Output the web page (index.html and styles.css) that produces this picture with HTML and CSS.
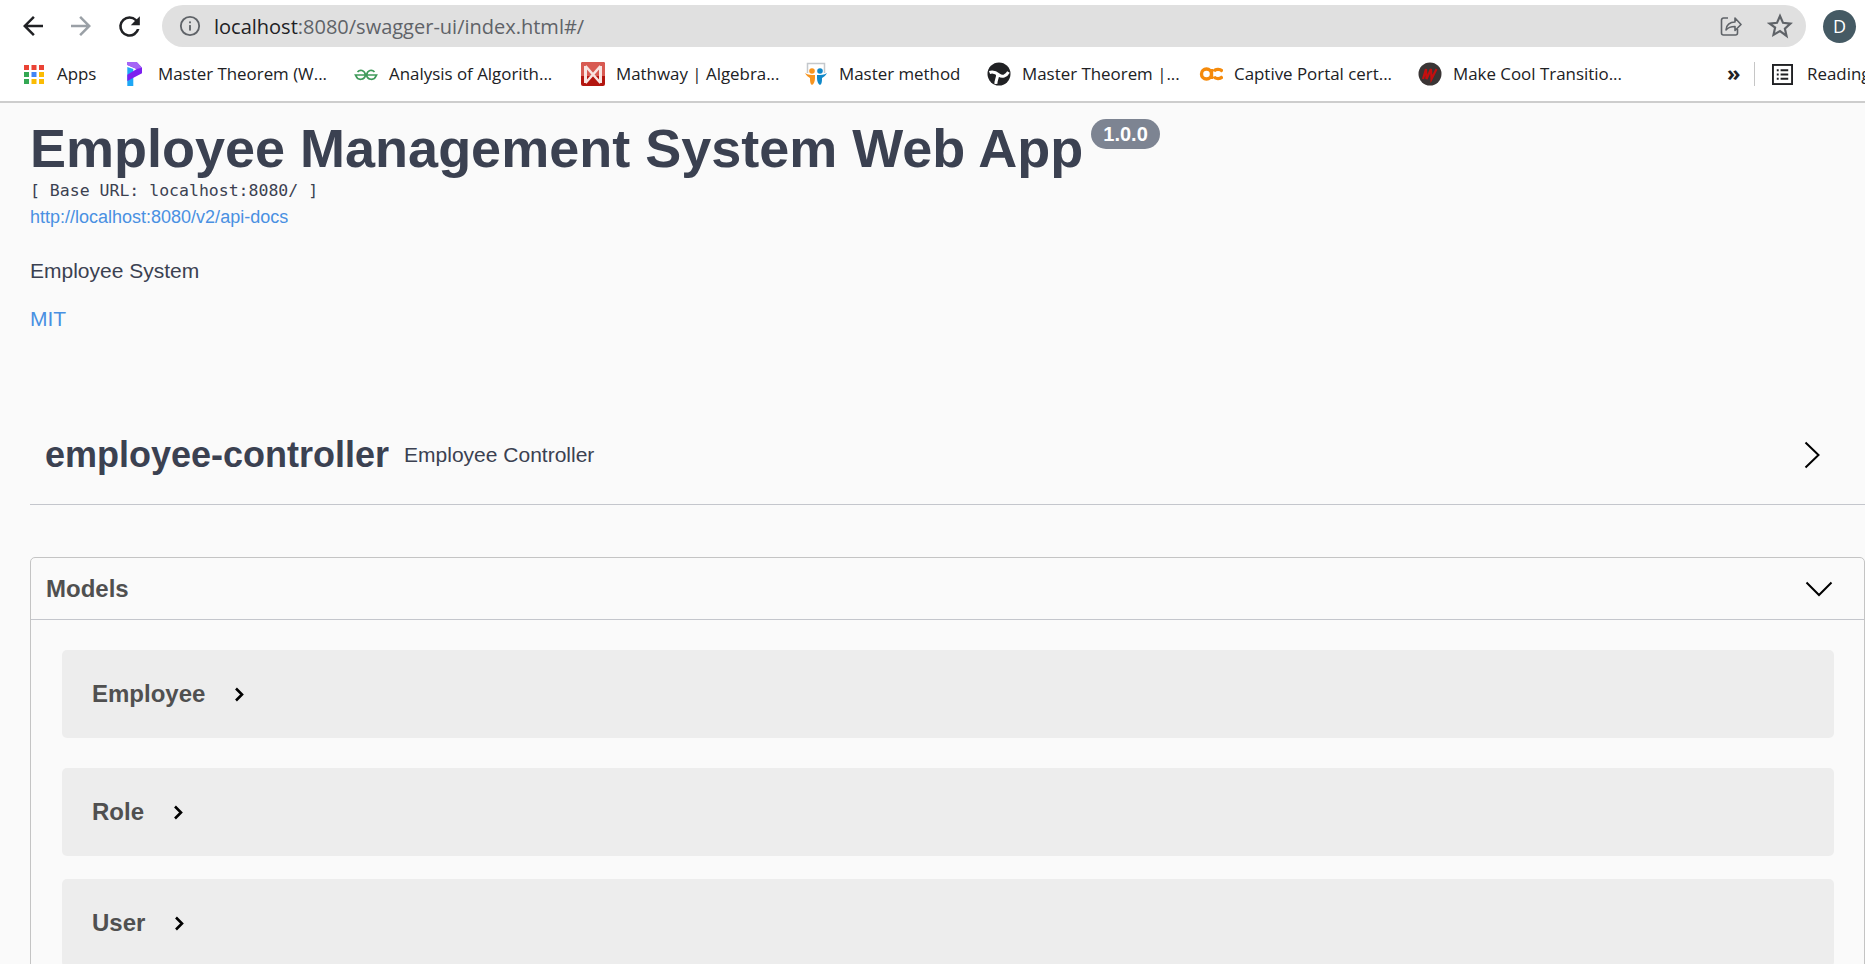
FILE: index.html
```html
<!DOCTYPE html>
<html lang="en">
<head>
    <meta charset="UTF-8">
    <meta name="viewport" content="width=device-width, initial-scale=1.0">
    <title>Swagger UI</title>
    <link rel="stylesheet" href="styles.css">
</head>
<body>
    <header class="chrome">
        <div class="toolbar">
            <svg class="nav-icon nav-back" viewBox="0 0 24 24"><path d="M20 11H7.83l5.59-5.59L12 4l-8 8 8 8 1.41-1.41L7.83 13H20v-2z"/></svg>
            <svg class="nav-icon nav-forward" viewBox="0 0 24 24"><path d="M4 11h12.17l-5.59-5.59L12 4l8 8-8 8-1.41-1.41L16.17 13H4v-2z"/></svg>
            <svg class="nav-icon nav-reload" viewBox="0 0 24 24"><path d="M17.65 6.35A7.96 7.96 0 0 0 12 4a8 8 0 1 0 7.73 10h-2.08A6 6 0 1 1 12 6c1.66 0 3.14.69 4.22 1.78L13 11h7V4l-2.35 2.35z"/></svg>
            <div class="omnibox">
                <svg class="info-icon" viewBox="0 0 24 24"><circle cx="12" cy="12" r="10" fill="none" stroke="#5f6368" stroke-width="2"/><rect x="11" y="11" width="2" height="6" fill="#5f6368"/><rect x="11" y="7" width="2" height="2" fill="#5f6368"/></svg>
                <span class="url"><span class="url-host">localhost</span>:8080/swagger-ui/index.html#/</span>
                <svg class="share-icon" viewBox="0 0 22 20"><path d="M8 2H3.500A2 2 0 0 0 1.500 4v13a2 2 0 0 0 2 2h12a2 2 0 0 0 2-2v-4M6 14c0-5 4-8 9-8V2l6 6.500-6 6V10.500c-4 0-7 1-9 3.500z" fill="none" stroke="#5f6368" stroke-width="1.600" stroke-linejoin="round"/></svg>
                <svg class="star-icon" viewBox="0 0 24 24"><path d="M12 2.800l2.800 6.300 6.800.7-5.100 4.600 1.500 6.800L12 16.700 6 20.200l1.500-6.800L2.400 9.800l6.800-.7z" fill="none" stroke="#5f6368" stroke-width="2" stroke-linejoin="miter"/></svg>
            </div>
            <div class="avatar">D</div>
        </div>
        <nav class="bookmarks">
            <a class="bookmark">
                <svg class="bm-icon" viewBox="0 0 24 24">
                    <rect x="2" y="3" width="5" height="5" fill="#ea4335"/><rect x="9.500" y="3" width="5" height="5" fill="#ea4335"/><rect x="17" y="3" width="5" height="5" fill="#ea4335"/>
                    <rect x="2" y="10" width="5" height="5" fill="#34a853"/><rect x="9.500" y="10" width="5" height="5" fill="#4285f4"/><rect x="17" y="10" width="5" height="5" fill="#fbbc04"/>
                    <rect x="2" y="17" width="5" height="5" fill="#34a853"/><rect x="9.500" y="17" width="5" height="5" fill="#fbbc04"/><rect x="17" y="17" width="5" height="5" fill="#fbbc04"/>
                </svg>
                <span class="bm-label">Apps</span>
            </a>
            <a class="bookmark bookmark-tight">
                <svg class="bm-icon" viewBox="0 0 24 24">
                    <path d="M1.300 5L7.300 7V24H1.300z" fill="#1ea7f5"/>
                    <path d="M1.300 0H10.700L16 5.700V11.300L1.300 19V12.700L10.700 7 1.300 3z" fill="#7c1ff0"/>
                    <path d="M1.300 0H10.700L16 5.700 10.700 7 1.300 3z" fill="#a565f5"/>
                </svg>
                <span class="bm-label">Master Theorem (W...</span>
            </a>
            <a class="bookmark">
                <svg class="bm-icon" viewBox="0 0 24 24">
                    <path d="M3.500 10C6 7 10.500 8 11.500 13 10.500 18 4 19 2 14L1.500 13H22.500L22 14C20 19 13.500 18 12.500 13 13.500 8 18 7 20.500 10" fill="none" stroke="#3f9a5a" stroke-width="1.700"/>
                </svg>
                <span class="bm-label">Analysis of Algorith...</span>
            </a>
            <a class="bookmark">
                <svg class="bm-icon" viewBox="0 0 24 24">
                    <rect x="0" y="0" width="24" height="24" rx="2" fill="#b3150f"/>
                    <path d="M0 2a2 2 0 0 1 2-2h20a2 2 0 0 1 2 2v12H0z" fill="#d85a52"/>
                    <path d="M4.500 21V4M19.500 21V4" stroke="#f8e4e2" stroke-width="3"/>
                    <path d="M4.500 4L19.500 21M19.500 4L4.500 21" stroke="#f8e4e2" stroke-width="2.600"/>
                </svg>
                <span class="bm-label">Mathway | Algebra...</span>
            </a>
            <a class="bookmark">
                <svg class="bm-icon" viewBox="0 0 24 24">
                    <path d="M3.500 11V1.500h17V11" fill="none" stroke="#c4c8cc" stroke-width="1.500"/>
                    <circle cx="8" cy="9" r="2.800" fill="#f7941e"/><circle cx="16" cy="9" r="2.800" fill="#0f88c9"/>
                    <path d="M1 11c3 2 6 2 10 2v3c0 3-1 6-3 7-2-1-2-4-2-7-2-1-4-3-5-5z" fill="#f7941e"/>
                    <path d="M23 11c-3 2-6 2-10 2v3c0 3 1 6 3 7 2-1 2-4 2-7 2-1 4-3 5-5z" fill="#0f88c9"/>
                </svg>
                <span class="bm-label">Master method</span>
            </a>
            <a class="bookmark">
                <svg class="bm-icon" viewBox="0 0 24 24">
                    <circle cx="12" cy="12" r="11.500" fill="#202124"/>
                    <path d="M2.500 10.500C6 9 9 10.500 12 13S19 14.500 21.500 10M10.500 12.500C11 16 8.500 18 9 22" fill="none" stroke="#fff" stroke-width="3"/>
                </svg>
                <span class="bm-label">Master Theorem |...</span>
            </a>
            <a class="bookmark">
                <svg class="bm-icon" viewBox="0 0 24 24">
                    <path d="M12.500 12a5 5 0 1 1-10 0 5 5 0 0 1 10 0zM12.500 7v10" fill="none" stroke="#f58a0b" stroke-width="3.400"/>
                    <path d="M15 9.500C16 7 21.500 6.500 23.500 9.500M15 14.500C16 17 21.500 17.500 23.500 14.500" fill="none" stroke="#f58a0b" stroke-width="3.200"/>
                </svg>
                <span class="bm-label">Captive Portal cert...</span>
            </a>
            <a class="bookmark">
                <svg class="bm-icon" viewBox="0 0 24 24">
                    <circle cx="12" cy="12" r="11.500" fill="#3a3535"/>
                    <path d="M5 17L8 7 8.500 17 13 7 13.500 17 18.500 7" fill="none" stroke="#c40f0f" stroke-width="2.200"/>
                </svg>
                <span class="bm-label">Make Cool Transitio...</span>
            </a>
            <span class="more">»</span>
            <span class="bm-sep"></span>
            <a class="bookmark reading">
                <svg class="reading-icon" viewBox="0 0 22 22">
                    <rect x="1" y="1" width="20" height="20" fill="none" stroke="#202124" stroke-width="2"/>
                    <path d="M5 6.500h2M9 6.500h8M5 11h2M9 11h8M5 15.500h2M9 15.500h8" stroke="#202124" stroke-width="2"/>
                </svg>
                <span class="bm-label">Reading list</span>
            </a>
        </nav>
    </header>

    <main class="swagger">
        <div class="title-row">
            <h1 class="title">Employee Management System Web App</h1>
            <span class="version">1.0.0</span>
        </div>
        <p class="base-url">[ Base URL: localhost:8080/ ]</p>
        <a class="link spec-link">http://localhost:8080/v2/api-docs</a>
        <p class="description">Employee System</p>
        <a class="link license">MIT</a>

        <section class="tag-row">
            <h2 class="tag-name">employee-controller</h2>
            <span class="tag-desc">Employee Controller</span>
            <svg class="tag-arrow" viewBox="0 0 16 28"><path d="M1.500 1.500L14.500 14 1.500 26.500" fill="none" stroke="#000" stroke-width="2"/></svg>
        </section>

        <section class="models">
            <div class="models-head">
                <h3 class="models-title">Models</h3>
                <svg class="models-arrow" viewBox="0 0 28 16"><path d="M1.500 1.500L14 14 26.500 1.500" fill="none" stroke="#000" stroke-width="2"/></svg>
            </div>
            <div class="models-body">
                <div class="model model-employee">
                    <span class="model-name">Employee</span>
                    <svg class="model-arrow" viewBox="0 0 10 15"><path d="M2 1.500L8 7.500 2 13.500" fill="none" stroke="#000" stroke-width="2.600"/></svg>
                </div>
                <div class="model model-role">
                    <span class="model-name">Role</span>
                    <svg class="model-arrow" viewBox="0 0 10 15"><path d="M2 1.500L8 7.500 2 13.500" fill="none" stroke="#000" stroke-width="2.600"/></svg>
                </div>
                <div class="model model-user">
                    <span class="model-name">User</span>
                    <svg class="model-arrow" viewBox="0 0 10 15"><path d="M2 1.500L8 7.500 2 13.500" fill="none" stroke="#000" stroke-width="2.600"/></svg>
                </div>
            </div>
        </section>
    </main>
</body>
</html>
```

FILE: styles.css
```css
html, body {
    margin: 0;
    height: 964px;
    overflow: hidden;
}
body {
    background: #fafafa;
    font-family: "Liberation Sans", Arial, sans-serif;
    color: #3b4151;
}

/* browser chrome */
.chrome {
    background: #fff;
    border-bottom: 2px solid #cdcdcd;
    height: 101px;
    overflow: hidden;
    font-family: "Open Sans", "Noto Sans", sans-serif;
}
.toolbar {
    display: flex;
    align-items: center;
    height: 52px;
}
.nav-icon {
    width: 30px;
    height: 30px;
    fill: #202124;
    flex: none;
}
.nav-back {
    margin-left: 18px;
}
.nav-forward {
    margin-left: 18px;
    fill: #9aa0a6;
}
.nav-reload {
    margin-left: 18px;
    width: 31px;
    height: 31px;
}
.omnibox {
    display: flex;
    align-items: center;
    flex: none;
    width: 1644px;
    height: 42px;
    margin-left: 17px;
    border-radius: 21px;
    background: #e0e0e0;
}
.info-icon {
    width: 22px;
    height: 22px;
    margin-left: 17px;
}
.url {
    margin-left: 13px;
    font-size: 20px;
    color: #5f6368;
    white-space: nowrap;
}
.url-host {
    color: #202124;
}
.share-icon {
    width: 22px;
    height: 20px;
    margin-left: auto;
}
.star-icon {
    width: 26px;
    height: 26px;
    margin-left: 25px;
    margin-right: 13px;
}
.avatar {
    flex: none;
    width: 33px;
    height: 33px;
    margin-left: 17px;
    border-radius: 50%;
    background: #455a64;
    color: #fff;
    font-size: 18px;
    line-height: 33px;
    text-align: center;
}
.bookmarks {
    display: grid;
    grid-template-columns: 104px 228px 227px 223px 183px 212px 219px 309px 27px 18px 120px;
    align-items: center;
    height: 44px;
    padding-left: 22px;
    font-size: 16.900px;
    color: #202124;
    white-space: nowrap;
}
.bookmark {
    display: flex;
    align-items: center;
    gap: 11px;
}
.bookmark-tight {
    gap: 8px;
}
.bm-label {
    margin-bottom: 2px;
}
.bm-icon {
    width: 24px;
    height: 24px;
    flex: none;
}
.more {
    margin-bottom: 4px;
    font-size: 22px;
    font-weight: 700;
    line-height: 22px;
}
.bm-sep {
    width: 1px;
    height: 24px;
    background: #c6c6c6;
}
.reading {
    gap: 14px;
}
.reading-icon {
    width: 21px;
    height: 21px;
    flex: none;
}

/* swagger page */
.swagger {
    padding-left: 30px;
}
.title-row {
    display: flex;
    align-items: flex-start;
    margin-top: 13px;
}
.title {
    margin: 0;
    font-size: 54px;
    line-height: 64px;
    font-weight: 700;
}
.version {
    margin-top: 3px;
    margin-left: 8px;
    padding: 0 12px;
    border-radius: 15px;
    background: #7d8492;
    color: #fff;
    font-size: 20px;
    font-weight: 700;
    line-height: 30px;
}
.base-url {
    margin: 1px 0 0;
    font-family: "DejaVu Sans Mono", monospace;
    font-size: 16.500px;
    line-height: 20px;
}
.link {
    display: block;
    color: #4990e2;
}
.spec-link {
    margin-top: 6px;
    font-size: 18px;
    line-height: 20px;
}
.description {
    margin: 32px 0 0;
    font-size: 21px;
    line-height: 24px;
}
.license {
    margin-top: 24px;
    font-size: 21px;
    line-height: 24px;
}
.tag-row {
    display: flex;
    align-items: center;
    height: 98px;
    margin-top: 75px;
    padding-left: 15px;
    border-bottom: 1px solid #c4c6cc;
}
.tag-name {
    margin: 0;
    font-size: 36px;
    font-weight: 700;
}
.tag-desc {
    margin-left: 15px;
    font-size: 21px;
}
.tag-arrow {
    width: 16px;
    height: 28px;
    margin-left: auto;
    margin-right: 45px;
}
.models {
    margin-top: 52px;
    border: 1px solid #c4c4c4;
    border-radius: 5px 5px 0 0;
}
.models-head {
    display: flex;
    align-items: center;
    height: 61px;
    padding-left: 15px;
    border-bottom: 1px solid #c4c6cc;
}
.models-title {
    margin: 0;
    font-size: 24px;
    font-weight: 700;
    color: #505050;
}
.models-arrow {
    width: 28px;
    height: 16px;
    margin-left: auto;
    margin-right: 31px;
}
.models-body {
    padding: 0 30px 0 31px;
}
.model {
    display: flex;
    align-items: center;
    gap: 29px;
    height: 88px;
    padding-left: 30px;
    border-radius: 5px;
    background: #ededed;
}
.model-employee {
    margin-top: 30px;
}
.model-role {
    margin-top: 30px;
}
.model-user {
    margin-top: 23px;
}
.model-name {
    font-size: 24px;
    font-weight: 700;
    color: #505050;
}
.model-arrow {
    width: 10px;
    height: 15px;
}
```
